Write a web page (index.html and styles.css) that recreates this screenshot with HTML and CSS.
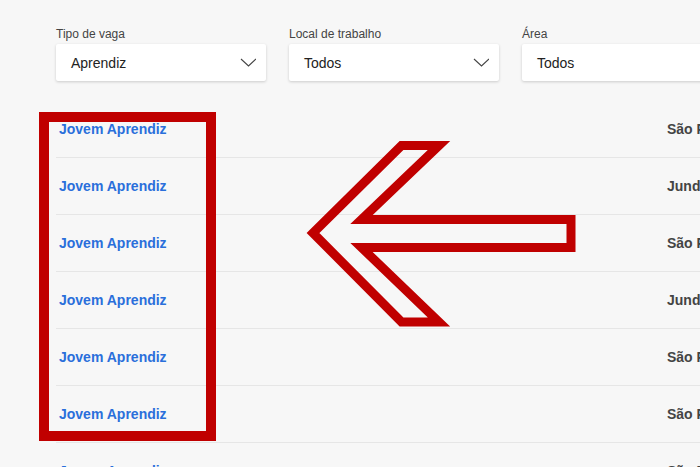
FILE: index.html
```html
<!DOCTYPE html>
<html lang="pt-BR">
<head>
  <meta charset="UTF-8">
  <meta name="viewport" content="width=device-width, initial-scale=1.0">
  <title>Vagas</title>
  <link rel="stylesheet" href="styles.css">
</head>
<body>
  <div class="page">
    <!-- filtros -->
    <div class="filters">
      <div class="filter">
        <div class="filter-label">Tipo de vaga</div>
        <div class="select">
          <span>Aprendiz</span>
          <svg class="chevron" width="16" height="9" viewBox="0 0 16 9"><path d="M1 1l7.5 7 7.5-7" fill="none" stroke="#444" stroke-width="1.1"/></svg>
        </div>
      </div>
      <div class="filter">
        <div class="filter-label">Local de trabalho</div>
        <div class="select">
          <span>Todos</span>
          <svg class="chevron" width="16" height="9" viewBox="0 0 16 9"><path d="M1 1l7.5 7 7.5-7" fill="none" stroke="#444" stroke-width="1.1"/></svg>
        </div>
      </div>
      <div class="filter">
        <div class="filter-label">Área</div>
        <div class="select">
          <span>Todos</span>
          <svg class="chevron" width="16" height="9" viewBox="0 0 16 9"><path d="M1 1l7.5 7 7.5-7" fill="none" stroke="#444" stroke-width="1.1"/></svg>
        </div>
      </div>
    </div>

    <!-- lista de vagas -->
    <ul class="jobs">
      <li class="job"><a href="#">Jovem Aprendiz</a><span class="city">São Paulo</span></li>
      <li class="job"><a href="#">Jovem Aprendiz</a><span class="city">Jundiaí</span></li>
      <li class="job"><a href="#">Jovem Aprendiz</a><span class="city">São Paulo</span></li>
      <li class="job"><a href="#">Jovem Aprendiz</a><span class="city">Jundiaí</span></li>
      <li class="job"><a href="#">Jovem Aprendiz</a><span class="city">São Paulo</span></li>
      <li class="job"><a href="#">Jovem Aprendiz</a><span class="city">São Paulo</span></li>
      <li class="job"><a href="#">Jovem Aprendiz</a><span class="city">São Paulo</span></li>
    </ul>
  </div>

  <!-- marcação vermelha -->
  <svg class="markup" width="700" height="467" viewBox="0 0 700 467">
    <rect x="44" y="117" width="167" height="319" fill="none" stroke="#c00000" stroke-width="10"/>
    <polygon points="313,233 401.5,145.5 439,145.5 361.5,219.5 571,219.5 571,247.5 361.5,247.5 439,322 401.5,322"
             fill="none" stroke="#c00000" stroke-width="9" stroke-linejoin="miter" stroke-miterlimit="10"/>
  </svg>
</body>
</html>
```

FILE: styles.css
```css
body {
  margin: 0;
  background: #f7f7f7;
  font-family: "Liberation Sans", Arial, sans-serif;
  color: #333;
  overflow: hidden;
  height: 467px;
  position: relative;
}

.page {
  width: 900px;
  padding: 27px 0 0 56px;
}

/* filtros */
.filters {
  display: flex;
  gap: 23px;
}

.filter {
  width: 210px;
}

.filter-label {
  font-size: 12px;
  line-height: 14px;
  color: #444;
  margin-bottom: 3px;
}

.select {
  height: 37px;
  background: #fff;
  border-radius: 2px;
  box-shadow: 0 1px 3px rgba(0, 0, 0, 0.18);
  display: flex;
  align-items: center;
  justify-content: space-between;
  padding: 0 10px 0 15px;
  font-size: 14px;
  color: #222;
}

.chevron {
  display: block;
}

/* vagas */
.jobs {
  list-style: none;
  margin: 20px 0 0;
  padding: 0;
}

.job {
  height: 56px;
  border-bottom: 1px solid #e6e6e6;
  display: grid;
  grid-template-columns: 611px 1fr;
  align-items: center;
  font-size: 14px;
  font-weight: bold;
}

.job a {
  color: #2a6fdb;
  text-decoration: none;
  padding-left: 3px;
}

.city {
  color: #444;
}

/* anotação */
.markup {
  position: absolute;
  left: 0;
  top: 0;
}
```
